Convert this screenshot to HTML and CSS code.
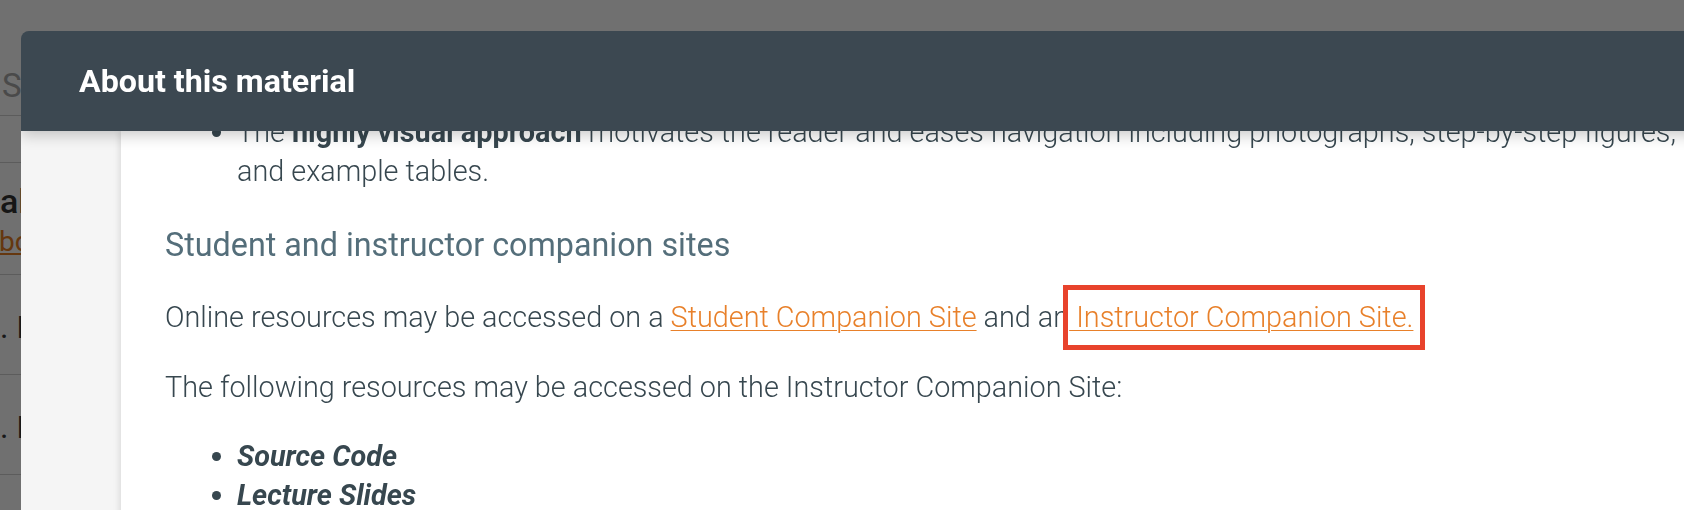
FILE: index.html
```html
<!DOCTYPE html>
<html lang="en">
<head>
<meta charset="utf-8">
<title>About this material</title>
<link rel="stylesheet" href="styles.css">
</head>
<body>
<div class="page">
  <aside class="sidebar">
    <div class="search">Search</div>
    <div class="row row-empty"></div>
    <div class="row course">
      <div class="course-title">al</div>
      <a class="course-link" href="#">book</a>
    </div>
    <div class="row chapter"><span class="chapter-text">1. Introduction</span></div>
    <div class="row chapter"><span class="chapter-text">1. Introduction</span></div>
    <div class="row chapter"><span class="chapter-text">1. Introduction</span></div>
  </aside>
</div>
<div class="backdrop"></div>
<div class="modal">
  <header class="modal-header">
    <h1 class="modal-title">About this material</h1>
  </header>
  <div class="modal-body">
    <div class="modal-rail"></div>
    <div class="modal-content">
      <div class="scroll">
        <ul class="features">
          <li>The <b>highly visual approach</b> motivates the reader and eases navigation including photographs, step-by-step figures, screenshots, and example tables.</li>
        </ul>
        <h2 class="section-title">Student and instructor companion sites</h2>
        <p class="para">Online resources may be accessed on a <a class="link" href="#">Student Companion Site</a> and an<a class="link highlight" href="#"> Instructor Companion Site.</a></p>
        <p class="para">The following resources may be accessed on the Instructor Companion Site:</p>
        <ul class="resources">
          <li><b><i>Source Code</i></b></li>
          <li><b><i>Lecture Slides</i></b></li>
          <li><b><i>Solutions Manual</i></b></li>
        </ul>
      </div>
    </div>
  </div>
</div>
</body>
</html>
```
FILE: styles.css
```css
* { box-sizing: border-box; }

html, body {
  margin: 0;
  padding: 0;
  width: 100%;
  height: 100%;
  overflow: hidden;
  background: #ffffff;
  font-family: Roboto, "Liberation Sans", Arial, sans-serif;
}

/* ---------- page behind the dialog ---------- */
.page {
  width: 100%;
  height: 100%;
}

.sidebar {
  width: 420px;
  display: flex;
  flex-direction: column;
}

.search {
  height: 116px;
  padding: 66px 0 0 2px;
  font-size: 33px;
  line-height: 40px;
  font-weight: 400;
  color: #a8a8a8;
  border-bottom: 1px solid #d2d2d2;
  white-space: nowrap;
}

.row {
  border-bottom: 1px solid #d2d2d2;
  white-space: nowrap;
}

.row-empty { height: 47px; }

.course {
  height: 112px;
  padding-top: 18px;
  display: flex;
  flex-direction: column;
  gap: 4px;
}

.course-title {
  font-size: 34px;
  line-height: 40px;
  font-weight: 500;
  color: #333333;
}

.course-link {
  margin-left: -1px;
  font-size: 28px;
  line-height: 34px;
  color: #e67e22;
  text-decoration: underline;
}

.chapter {
  height: 100px;
  padding-top: 32px;
  font-size: 32px;
  line-height: 40px;
  color: #3a3a3a;
}

.chapter-text {
  display: block;
  margin-left: -18px;
}

.backdrop {
  position: fixed;
  inset: 0;
  background: rgba(0, 0, 0, 0.56);
}

/* ---------- dialog ---------- */
.modal {
  position: fixed;
  left: 21px;
  top: 31px;
  width: 1900px;
  height: 700px;
  display: flex;
  flex-direction: column;
  border-radius: 8px 8px 0 0;
  overflow: hidden;
}

.modal-header {
  position: relative;
  z-index: 2;
  height: 100px;
  flex: none;
  display: flex;
  align-items: center;
  padding-left: 58px;
  background: #3c4851;
  box-shadow: 0 4px 14px rgba(0, 0, 0, 0.22);
}

.modal-title {
  margin: 0;
  font-size: 32.2px;
  line-height: 40px;
  font-weight: 700;
  color: #ffffff;
}

.modal-body {
  flex: 1;
  display: flex;
  overflow: hidden;
}

.modal-rail {
  width: 100px;
  flex: none;
  background: #f5f5f5;
}

.modal-content {
  position: relative;
  z-index: 1;
  flex: 1;
  background: #ffffff;
  padding-left: 44px;
  box-shadow: -2px 0 6px rgba(0, 0, 0, 0.10);
  overflow: hidden;
}

.scroll {
  width: 1696px;
  margin-top: -18px;
  font-size: 28.8px;
  line-height: 39.2px;
  font-weight: 300;
  color: #37474f;
}

.scroll b { font-weight: 700; }

.features {
  margin: 0;
  padding-left: 72px;
}

.section-title {
  margin: 35px 0 33px;
  font-size: 32.3px;
  line-height: 39px;
  font-weight: 400;
  color: #546e7a;
}

.para {
  margin: 0 0 30px;
}

.resources {
  margin: 0;
  padding-left: 72px;
}

.link {
  color: #e8802a;
  text-decoration: underline;
  text-decoration-thickness: 1px;
  text-underline-offset: 3px;
}

.highlight {
  position: relative;
}

.highlight::after {
  content: "";
  position: absolute;
  left: -6px;
  right: -12px;
  top: -15px;
  bottom: -16px;
  border: 5px solid #e8432c;
}
```
